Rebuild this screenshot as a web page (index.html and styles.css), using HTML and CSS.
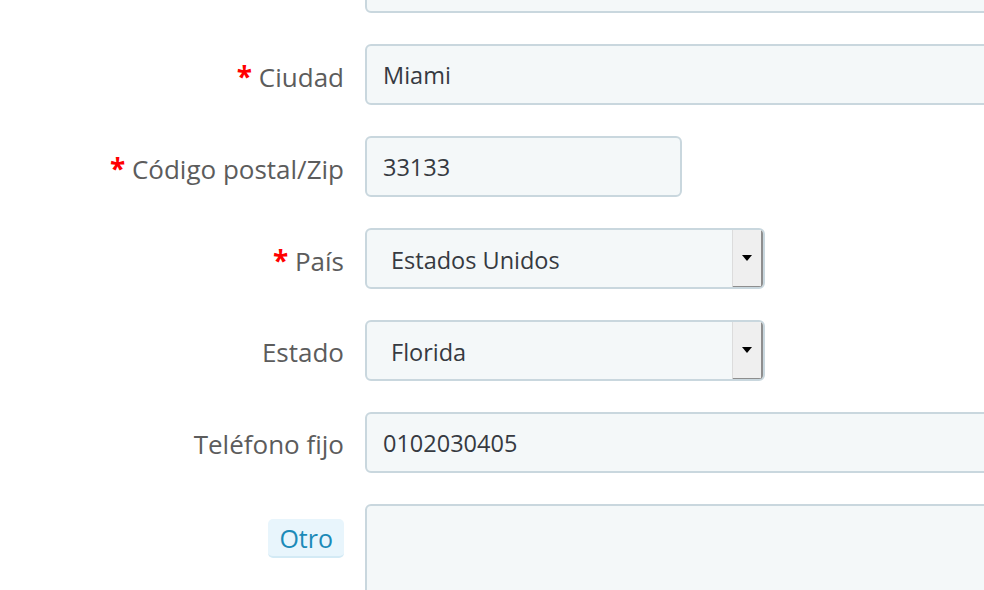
FILE: index.html
```html
<!DOCTYPE html>
<html lang="es">

<head>
    <meta charset="UTF-8">
    <meta name="viewport" content="width=device-width, initial-scale=1.0">
    <title>Dirección</title>
    <link rel="stylesheet" href="styles.css">
</head>

<body>
    <!-- Address form -->
    <form class="address-form">
        <div class="form-row first-row">
            <div class="form-label"></div>
            <div class="field field-wide"></div>
        </div>

        <div class="form-row">
            <label class="form-label"><span class="required">*</span> Ciudad</label>
            <div class="field field-wide">Miami</div>
        </div>

        <div class="form-row">
            <label class="form-label"><span class="required">*</span> Código postal/Zip</label>
            <div class="field field-short">33133</div>
        </div>

        <div class="form-row">
            <label class="form-label"><span class="required">*</span> País</label>
            <div class="field field-select">
                <span class="select-text">Estados Unidos</span>
                <span class="select-arrow"></span>
            </div>
        </div>

        <div class="form-row">
            <label class="form-label">Estado</label>
            <div class="field field-select">
                <span class="select-text">Florida</span>
                <span class="select-arrow"></span>
            </div>
        </div>

        <div class="form-row">
            <label class="form-label">Teléfono fijo</label>
            <div class="field field-wide">0102030405</div>
        </div>

        <div class="form-row textarea-row">
            <div class="form-label"><span class="badge">Otro</span></div>
            <div class="field field-wide field-area"></div>
        </div>
    </form>
</body>

</html>
```

FILE: styles.css
```css
/* General Styles */
* {
    margin: 0;
    padding: 0;
    box-sizing: border-box;
}

body {
    font-family: "Open Sans", "Noto Sans", sans-serif;
    background-color: #fff;
    overflow: hidden;
    width: 984px;
    height: 590px;
}

/* Form Layout */
.address-form {
    display: flex;
    flex-direction: column;
    gap: 31px;
    margin-top: -48px;
}

.form-row {
    display: grid;
    grid-template-columns: 344px 1fr;
    column-gap: 21px;
    align-items: center;
}

.form-label {
    text-align: right;
    font-size: 26px;
    color: #5c5c5c;
    white-space: nowrap;
    padding-top: 2px;
}

.required {
    color: #f00;
    font-weight: bold;
    font-size: 28px;
}

/* Inputs */
.field {
    height: 61px;
    border: 2px solid #c9d7de;
    border-radius: 6px;
    background-color: #f4f8f9;
    font-size: 23.5px;
    color: #363a41;
    display: flex;
    align-items: center;
    padding-left: 16px;
    padding-top: 1px;
}

.field-wide {
    width: 700px;
}

.field-short {
    width: 317px;
}

/* Select box */
.field-select {
    width: 400px;
    padding-left: 24px;
    padding-right: 0;
    padding-top: 0;
    justify-content: space-between;
    overflow: hidden;
}

.select-text {
    padding-top: 3px;
}

.select-arrow {
    width: 32px;
    height: 59px;
    align-self: flex-start;
    background-color: #efefef;
    border-left: 1px solid #dcdcdc;
    border-right: 3px solid #8e8e8e;
    border-bottom: 3px solid #8e8e8e;
    margin-right: -1px;
    position: relative;
}

.select-arrow::after {
    content: "";
    position: absolute;
    left: 9px;
    top: 25px;
    border-left: 5px solid transparent;
    border-right: 5px solid transparent;
    border-top: 6px solid #000;
}

/* Textarea */
.textarea-row {
    align-items: start;
}

.textarea-row .form-label {
    padding-top: 15px;
}

.field-area {
    height: 140px;
}

.badge {
    display: inline-block;
    background-color: #e8f5fc;
    border-bottom: 2px solid #d3eaf5;
    color: #1b8ab8;
    border-radius: 5px;
    padding: 1px 11px 0;
    font-size: 25px;
    line-height: 36px;
}
```
